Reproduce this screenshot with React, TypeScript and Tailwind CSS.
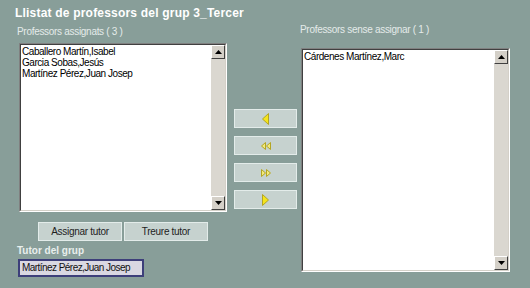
import React from "react";

const assigned = ["Caballero Martín,Isabel", "Garcia Sobas,Jesús", "Martínez Pérez,Juan Josep"];
const unassigned = ["Cárdenes Martínez,Marc"];

// Classic raised scrollbar arrow button
const ScrollArrow: React.FC<{ down?: boolean }> = ({ down }) => (
  <div className="h-[14px] w-[14px] flex items-center justify-center bg-[#d4d0c8] border border-t-white border-l-white border-r-[#404040] border-b-[#404040]">
    <svg width="7" height="4" viewBox="0 0 7 4">
      {down ? <polygon points="0,0 7,0 3.5,4" fill="#000" /> : <polygon points="3.5,0 7,4 0,4" fill="#000" />}
    </svg>
  </div>
);

const ListBox: React.FC<{ items: string[]; className: string }> = ({ items, className }) => (
  <div className={`border border-t-[#808080] border-l-[#808080] border-r-white border-b-white ${className}`}>
    <div className="h-full flex border border-t-[#404040] border-l-[#404040] border-r-[#d4d0c8] border-b-[#d4d0c8] bg-white">
      <div className="flex-1 pl-[1px] pt-[1px] text-[10px] leading-[11px] tracking-[-0.45px] text-black">
        {items.map((name) => (
          <div key={name}>{name}</div>
        ))}
      </div>
      <div className="w-[14px] flex flex-col bg-[#dad7d0]">
        <ScrollArrow />
        <div className="flex-1" />
        <ScrollArrow down />
      </div>
    </div>
  </div>
);

const MoveButton: React.FC<{ children: React.ReactNode }> = ({ children }) => (
  <button className="h-[19px] w-[63px] flex items-center justify-center bg-[#c6d2cf] border border-[#e3ecea]">
    {children}
  </button>
);

const Tri: React.FC<{ dir: "left" | "right"; small?: boolean }> = ({ dir, small }) => {
  const w = small ? 5 : 7;
  const h = small ? 8 : 12;
  const pts = dir === "left" ? `${w - 0.5},0.5 ${w - 0.5},${h - 0.5} 0.5,${h / 2}` : `0.5,0.5 0.5,${h - 0.5} ${w - 0.5},${h / 2}`;
  return (
    <svg width={w} height={h} viewBox={`0 0 ${w} ${h}`}>
      <polygon points={pts} fill={small ? "#f3ea7a" : "#f4e41c"} stroke="#b3a522" strokeWidth="1" />
    </svg>
  );
};

export default function App() {
  return (
    <div className="w-[530px] h-[288px] bg-[#889e99] font-['Liberation_Sans',Arial,sans-serif] overflow-hidden">
      <div className="pl-[15px] pt-[6px] text-[12px] leading-[14px] font-bold tracking-[0.2px] text-white">
        Llistat de professors del grup 3_Tercer
      </div>

      <div className="flex">
        {/* Assigned */}
        <div className="ml-[17px] w-[210px] flex flex-col">
          <div className="mt-[6px] text-[10px] leading-[12px] tracking-[-0.3px] text-[#e4ebe9]">Professors assignats ( 3 )</div>
          <ListBox items={assigned} className="mt-[5px] ml-[2px] w-[208px] h-[169px]" />
          <div className="mt-[10px] flex justify-center gap-[2px] pl-[2px]">
            <button className="h-[19px] w-[84px] bg-[#c6d2cf] border border-[#e3ecea] text-[10px] tracking-[-0.3px] text-[#1e1e1e]">
              Assignar tutor
            </button>
            <button className="h-[19px] w-[84px] bg-[#c6d2cf] border border-[#e3ecea] text-[10px] tracking-[-0.3px] text-[#1e1e1e]">
              Treure tutor
            </button>
          </div>
          <div className="mt-[4px] text-[10px] leading-[12px] font-bold text-[#e8efed]">Tutor del grup</div>
          <div className="mt-[2px] ml-[1px] w-[126px] h-[18px] border-2 border-[#3d3f7a] bg-[#d9d8e2] pl-[2px] text-[10px] leading-[14px] tracking-[-0.55px] text-[#111]">
            Martínez Pérez,Juan Josep
          </div>
        </div>

        {/* Move buttons */}
        <div className="ml-[7px] mt-[89px] flex flex-col gap-[8px]">
          <MoveButton>
            <Tri dir="left" />
          </MoveButton>
          <MoveButton>
            <div className="flex">
              <Tri dir="left" small />
              <Tri dir="left" small />
            </div>
          </MoveButton>
          <MoveButton>
            <div className="flex">
              <Tri dir="right" small />
              <Tri dir="right" small />
            </div>
          </MoveButton>
          <MoveButton>
            <Tri dir="right" />
          </MoveButton>
        </div>

        {/* Unassigned */}
        <div className="ml-[3px] w-[210px] flex flex-col">
          <div className="mt-[4px] text-[10px] leading-[12px] tracking-[-0.3px] text-[#e4ebe9]">Professors sense assignar ( 1 )</div>
          <ListBox items={unassigned} className="mt-[12px] ml-[1px] w-[209px] h-[224px]" />
        </div>
      </div>
    </div>
  );
}
